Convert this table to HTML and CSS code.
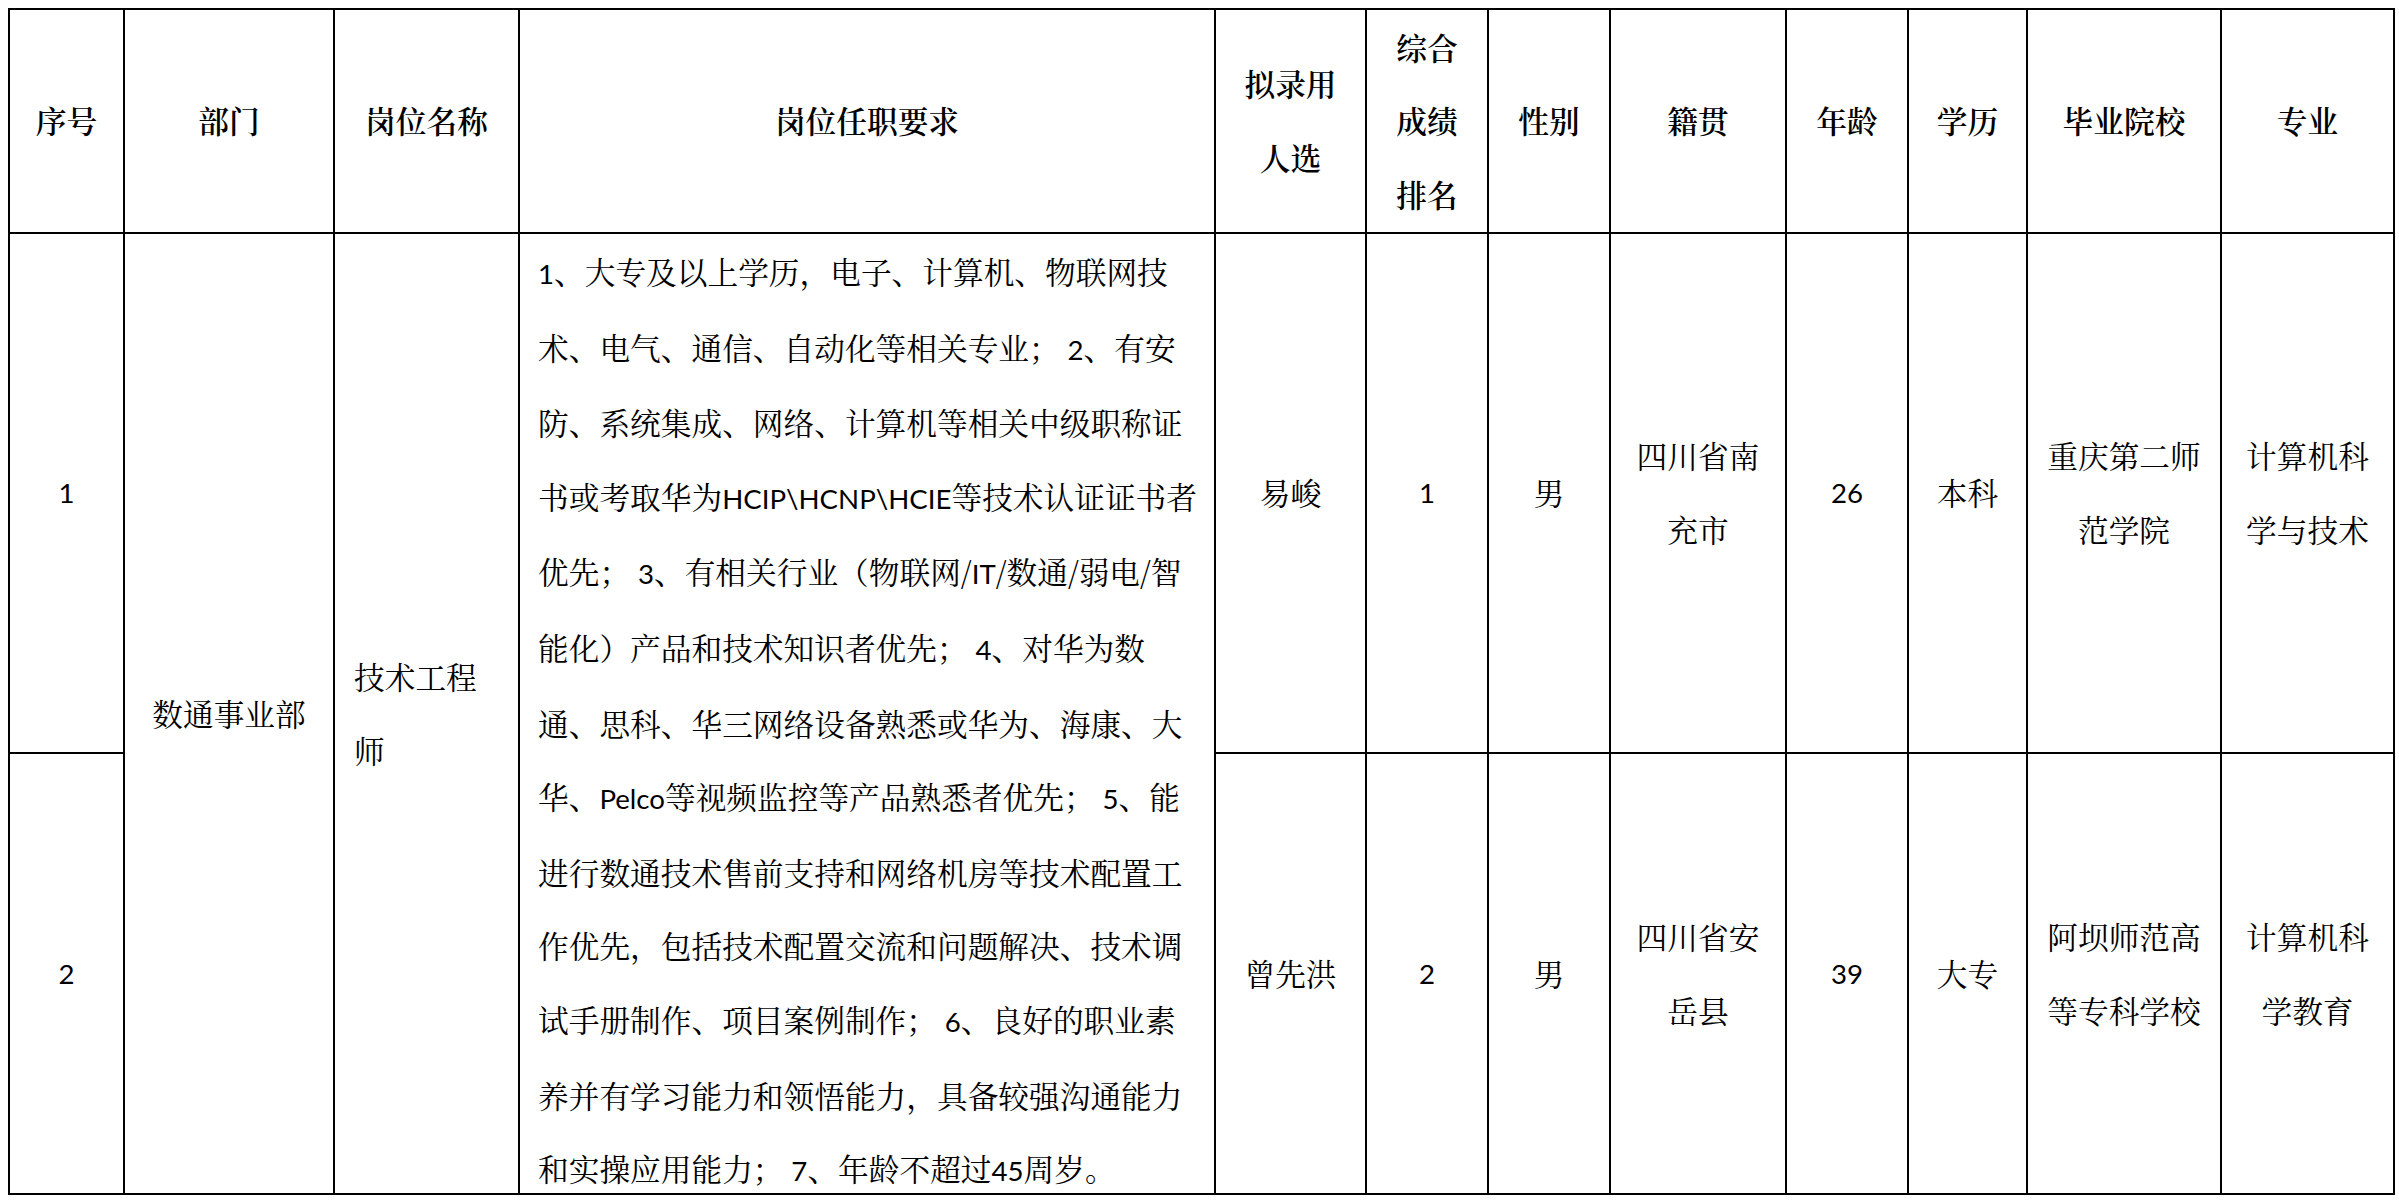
FILE: index.html
```html
<!DOCTYPE html>
<html lang="zh-CN">
<head>
<meta charset="utf-8">
<title>拟录用人选</title>
<link rel="stylesheet" href="styles.css">
</head>
<body>
<div class="sheet">
  <div class="cell hd">序号</div>
  <div class="cell hd">部门</div>
  <div class="cell hd">岗位名称</div>
  <div class="cell hd">岗位任职要求</div>
  <div class="cell hd">拟录用<br>人选</div>
  <div class="cell hd">综合<br>成绩<br>排名</div>
  <div class="cell hd">性别</div>
  <div class="cell hd">籍贯</div>
  <div class="cell hd">年龄</div>
  <div class="cell hd">学历</div>
  <div class="cell hd">毕业院校</div>
  <div class="cell hd">专业</div>

  <div class="cell"><span class="en">1</span></div>
  <div class="cell span2">数通事业部</div>
  <div class="cell span2 left title">技术工程<br>师</div>
  <div class="cell span2 left req">
    <span class="en">1</span>、大专及以上学历，电子、计算机、物联网技<br>
    术、电气、通信、自动化等相关专业； <span class="en">2</span>、有安<br>
    防、系统集成、网络、计算机等相关中级职称证<br>
    书或考取华为<span class="en">HCIP\HCNP\HCIE</span>等技术认证证书者<br>
    优先； <span class="en">3</span>、有相关行业（物联网/<span class="en">IT</span>/数通/弱电/智<br>
    能化）产品和技术知识者优先； <span class="en">4</span>、对华为数<br>
    通、思科、华三网络设备熟悉或华为、海康、大<br>
    华、<span class="en">Pelco</span>等视频监控等产品熟悉者优先； <span class="en">5</span>、能<br>
    进行数通技术售前支持和网络机房等技术配置工<br>
    作优先，包括技术配置交流和问题解决、技术调<br>
    试手册制作、项目案例制作； <span class="en">6</span>、良好的职业素<br>
    养并有学习能力和领悟能力，具备较强沟通能力<br>
    和实操应用能力； <span class="en">7</span>、年龄不超过<span class="en">45</span>周岁。
  </div>
  <div class="cell">易峻</div>
  <div class="cell"><span class="en">1</span></div>
  <div class="cell">男</div>
  <div class="cell">四川省南<br>充市</div>
  <div class="cell"><span class="en">26</span></div>
  <div class="cell">本科</div>
  <div class="cell">重庆第二师<br>范学院</div>
  <div class="cell">计算机科<br>学与技术</div>

  <div class="cell"><span class="en">2</span></div>
  <div class="cell">曾先洪</div>
  <div class="cell"><span class="en">2</span></div>
  <div class="cell">男</div>
  <div class="cell">四川省安<br>岳县</div>
  <div class="cell"><span class="en">39</span></div>
  <div class="cell">大专</div>
  <div class="cell">阿坝师范高<br>等专科学校</div>
  <div class="cell">计算机科<br>学教育</div>
</div>
</body>
</html>
```

FILE: styles.css
```css
html, body {
  margin: 0;
  padding: 0;
  background: #ffffff;
}

body {
  font-family: "Noto Serif CJK SC", "Noto Sans CJK SC", serif;
  color: #000000;
  font-size: 30.7px;
  line-height: 73.6px;
}

.sheet {
  display: grid;
  grid-template-columns: 113px 208px 183px 694px 149px 120px 120px 174px 120px 117px 192px 171px;
  grid-template-rows: 222px 518px 439px;
  gap: 2px;
  padding: 2px;
  background: #000000;
  width: max-content;
  margin: 8px 0 0 8px;
}

.cell {
  background: #ffffff;
  display: flex;
  flex-direction: column;
  justify-content: center;
  align-items: center;
  text-align: center;
  white-space: nowrap;
  overflow: visible;
}

.hd {
  font-weight: 600;
}

.span2 {
  grid-row: span 2;
}

.left {
  align-items: flex-start;
  text-align: left;
}

.title {
  padding-left: 19px;
}

.req {
  display: block;
  padding-left: 18px;
  padding-top: 1px;
}

.en {
  font-family: Lato, "Liberation Sans", sans-serif;
  font-size: 0.9em;
}
```
